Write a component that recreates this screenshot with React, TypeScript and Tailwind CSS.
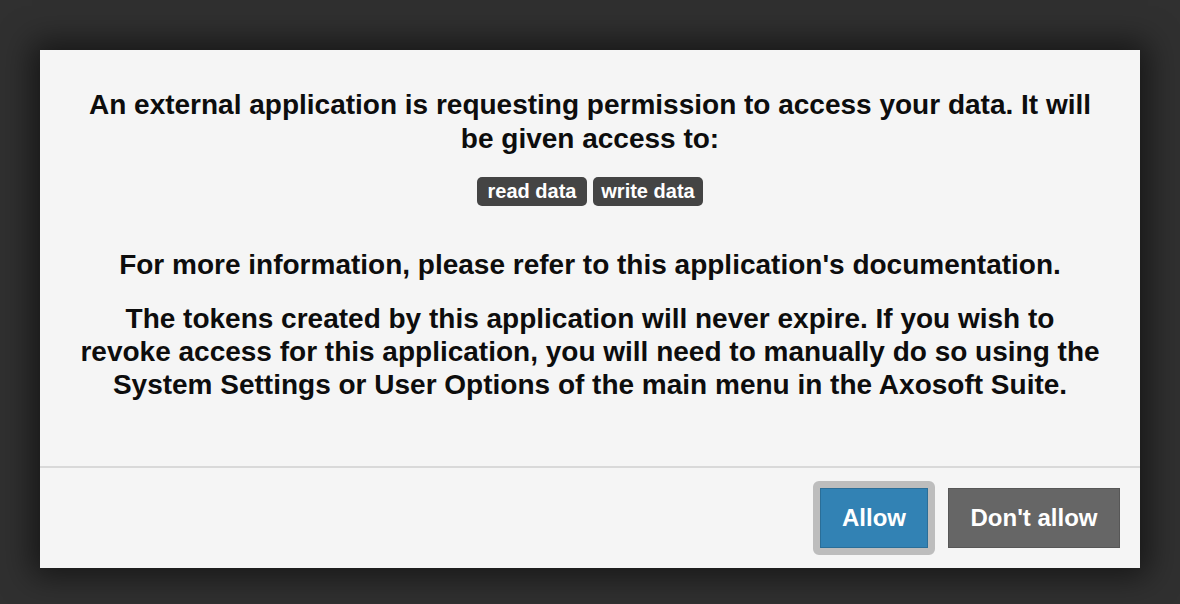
export default function App() {
  return (
    <div
      className="min-h-[604px] w-full bg-[#303030] px-[40px] pt-[50px] pb-[36px]"
      style={{ fontFamily: '"Liberation Sans", Arial, sans-serif' }}
    >
      <div className="flex h-[518px] flex-col bg-[#f5f5f5] shadow-[0_0_30px_8px_rgba(0,0,0,0.55)]">
        <div className="flex h-[416px] flex-col items-center px-[20px] pt-[38px] text-center font-bold text-[#0d0d0d]">
          <p className="text-[28px] leading-[34px]">
            An external application is requesting permission to access your data. It will
            <br />
            be given access to:
          </p>
          <div className="mt-[21px] flex gap-[6px]">
            <span className="h-[29px] w-[110px] rounded-[5px] bg-[#444] text-[20px] leading-[29px] text-white">
              read data
            </span>
            <span className="h-[29px] w-[110px] rounded-[5px] bg-[#444] text-[20px] leading-[29px] text-white">
              write data
            </span>
          </div>
          <p className="mt-[42px] text-[28px] leading-[34px]">
            For more information, please refer to this application's documentation.
          </p>
          <p className="mt-[20px] text-[28px] leading-[33px]">
            The tokens created by this application will never expire. If you wish to
            <br />
            revoke access for this application, you will need to manually do so using the
            <br />
            System Settings or User Options of the main menu in the Axosoft Suite.
          </p>
        </div>
        <div className="h-[2px] bg-[#d9d9d9]" />
        <div className="flex flex-1 items-center justify-end gap-[20px] pr-[20px]">
          <div className="-mx-[7px] rounded-[6px] border-[7px] border-[#bdbdbd]">
            <button className="block h-[60px] w-[108px] border border-[#2a6e98] bg-[#3282b4] text-[24px] font-bold text-white">
              Allow
            </button>
          </div>
          <button className="h-[60px] w-[172px] border border-[#575757] bg-[#666] text-[24px] font-bold text-white">
            Don't allow
          </button>
        </div>
      </div>
    </div>
  );
}
